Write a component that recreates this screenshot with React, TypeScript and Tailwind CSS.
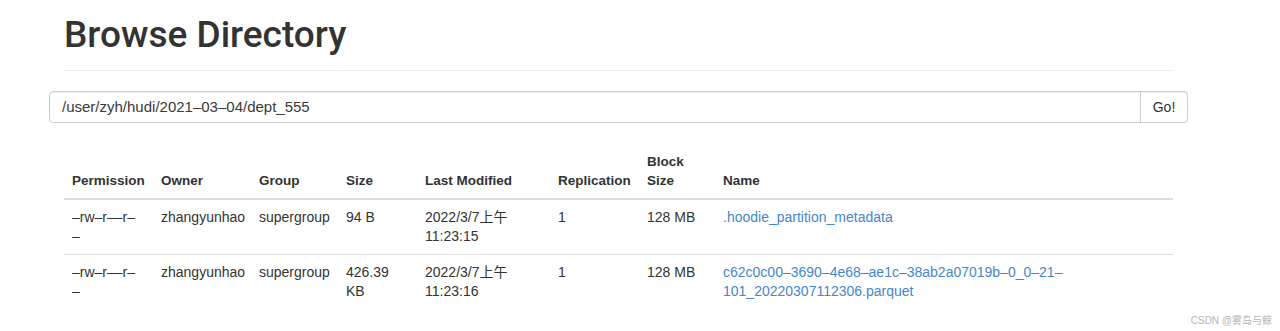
import React from "react";

const rows = [
  {
    owner: "zhangyunhao",
    group: "supergroup",
    size: "94 B",
    modified: "2022/3/7上午 11:23:15",
    repl: "1",
    block: "128 MB",
    name: ".hoodie_partition_metadata",
  },
  {
    owner: "zhangyunhao",
    group: "supergroup",
    size: "426.39 KB",
    modified: "2022/3/7上午 11:23:16",
    repl: "1",
    block: "128 MB",
    name: "c62c0c00–3690–4e68–ae1c–38ab2a07019b–0_0–21–101_20220307112306.parquet",
  },
];

const font = {
  fontFamily: '"Liberation Sans", Arial, "Noto Sans CJK SC", sans-serif',
};

export default function App() {
  return (
    <div
      className="relative w-[1280px] h-[331px] overflow-hidden bg-white text-[#333] pl-[49px] pr-[92px]"
      style={font}
    >
      <h1 className="ml-[15px] pt-[15px] text-[37px] leading-[40px] font-medium text-[#333] [font-family:Roboto,'Liberation_Sans',sans-serif]">
        Browse Directory
      </h1>
      <div className="mx-[15px] mt-[15px] border-t border-[#eee]" />
      <div className="mt-[20px] flex h-[32px] rounded-[4px] border border-[#ccc] shadow-[inset_0_1px_1px_rgba(0,0,0,0.075)]">
        <div className="flex flex-1 items-center px-[12px] text-[15px] text-[#3a3a3a]">
          /user/zyh/hudi/2021–03–04/dept_555
        </div>
        <div className="flex w-[47px] items-center justify-center border-l border-[#ccc] text-[14px] text-[#333]">
          Go!
        </div>
      </div>
      <div className="mx-[15px] mt-[21px]">
        <table className="w-full table-fixed border-collapse text-[14px] leading-[19px]">
          <colgroup>
            <col className="w-[89px]" />
            <col className="w-[98px]" />
            <col className="w-[87px]" />
            <col className="w-[79px]" />
            <col className="w-[133px]" />
            <col className="w-[89px]" />
            <col className="w-[76px]" />
            <col />
          </colgroup>
          <thead>
            <tr className="text-left align-bottom text-[13.5px] font-bold">
              <th className="border-b-2 border-[#ddd] p-[8px] whitespace-nowrap">Permission</th>
              <th className="border-b-2 border-[#ddd] p-[8px] whitespace-nowrap">Owner</th>
              <th className="border-b-2 border-[#ddd] p-[8px] whitespace-nowrap">Group</th>
              <th className="border-b-2 border-[#ddd] p-[8px] whitespace-nowrap">Size</th>
              <th className="border-b-2 border-[#ddd] p-[8px] whitespace-nowrap">Last Modified</th>
              <th className="border-b-2 border-[#ddd] p-[8px] whitespace-nowrap">Replication</th>
              <th className="border-b-2 border-[#ddd] p-[8px]">Block Size</th>
              <th className="border-b-2 border-[#ddd] p-[8px] whitespace-nowrap">Name</th>
            </tr>
          </thead>
          <tbody>
            {rows.map((r, i) => (
              <tr key={i} className="align-top">
                <td className="border-t border-[#ddd] py-[8px] pl-[8px] pr-[14px]">
                  –rw–r––r–<wbr />–
                </td>
                <td className="border-t border-[#ddd] p-[8px]">{r.owner}</td>
                <td className="border-t border-[#ddd] p-[8px]">{r.group}</td>
                <td className="border-t border-[#ddd] p-[8px]">{r.size}</td>
                <td className="border-t border-[#ddd] p-[8px]">{r.modified}</td>
                <td className="border-t border-[#ddd] p-[8px]">{r.repl}</td>
                <td className="border-t border-[#ddd] p-[8px]">{r.block}</td>
                <td className="border-t border-[#ddd] p-[8px]">
                  <a className="text-[#4586cd]">{r.name}</a>
                </td>
              </tr>
            ))}
          </tbody>
        </table>
      </div>
      <div className="absolute bottom-[4px] right-[8px] text-[10px] leading-[12px] text-[#b5b5b5]">
        CSDN @雾岛与鲸
      </div>
    </div>
  );
}
